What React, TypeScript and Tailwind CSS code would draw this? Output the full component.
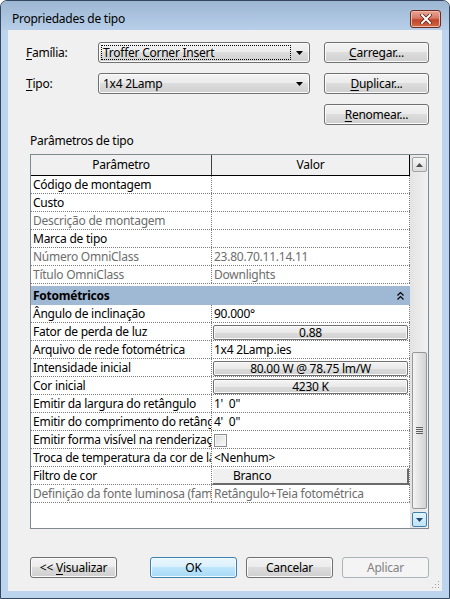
import React from "react";

type Row = {
  p: string;
  v?: string;
  gray?: boolean;
  btn?: string;
  check?: boolean;
  flat?: string;
};

const rowsA: Row[] = [
  { p: "Código de montagem", v: "" },
  { p: "Custo", v: "" },
  { p: "Descrição de montagem", v: "", gray: true },
  { p: "Marca de tipo", v: "" },
  { p: "Número OmniClass", v: "23.80.70.11.14.11", gray: true },
  { p: "Título OmniClass", v: "Downlights", gray: true },
];

const rowsB: Row[] = [
  { p: "Ângulo de inclinação", v: "90.000°" },
  { p: "Fator de perda de luz", btn: "0.88" },
  { p: "Arquivo de rede fotométrica", v: "1x4 2Lamp.ies" },
  { p: "Intensidade inicial", btn: "80.00 W @ 78.75 lm/W" },
  { p: "Cor inicial", btn: "4230 K" },
  { p: "Emitir da largura do retângulo", v: "1'  0\"" },
  { p: "Emitir do comprimento do retângulo", v: "4'  0\"" },
  { p: "Emitir forma visível na renderização", check: true },
  { p: "Troca de temperatura da cor de lâmpada", v: "<Nenhum>" },
  { p: "Filtro de cor", flat: "Branco" },
  { p: "Definição da fonte luminosa (família)", v: "Retângulo+Teia fotométrica", gray: true },
];

function WinButton({
  children,
  className = "",
  kind = "normal",
}: {
  children: React.ReactNode;
  className?: string;
  kind?: "normal" | "default" | "disabled";
}) {
  const styles = {
    normal:
      "border-[#707070] bg-[linear-gradient(to_bottom,#f3f3f3_0%,#ebebeb_50%,#dddddd_50%,#cfcfcf_100%)] text-black shadow-[inset_0_0_0_1px_#fbfbfb]",
    default:
      "border-[#3c7fb1] bg-[linear-gradient(to_bottom,#eaf6fd_0%,#d9f0fc_50%,#bee6fd_50%,#a7d9f5_100%)] text-black shadow-[inset_0_0_0_1px_#f4fbff]",
    disabled: "border-[#adb2b5] bg-[#f4f4f4] text-[#838383]",
  };
  return (
    <div
      className={`flex h-[21px] items-center justify-center rounded-[3px] border text-[12px] leading-none ${styles[kind]} ${className}`}
    >
      {children}
    </div>
  );
}

function Dropdown({ text, focused }: { text: string; focused?: boolean }) {
  return (
    <div className="flex h-[21px] w-[212px] items-stretch rounded-[3px] border border-[#707070] bg-[linear-gradient(to_bottom,#f3f3f3_0%,#ebebeb_50%,#dddddd_50%,#cfcfcf_100%)] p-[2px] shadow-[inset_0_0_0_1px_#fbfbfb]">
      <div
        className={`flex w-[190px] items-center whitespace-nowrap pl-[1px] text-[12px] leading-none text-black ${
          focused ? "border border-dotted border-black" : "border border-transparent"
        }`}
      >
        {text}
      </div>
      <div className="flex flex-1 items-center justify-center">
        <svg width="7" height="4" viewBox="0 0 7 4">
          <polygon points="0,0 7,0 3.5,4" fill="#000" />
        </svg>
      </div>
    </div>
  );
}

function CellValue({ r }: { r: Row }) {
  if (r.btn) {
    return (
      <div className="ml-[1px] mr-[1px] mt-[2px] flex h-[15px] items-center justify-center rounded-[2px] border border-[#707070] bg-[linear-gradient(to_bottom,#f4f4f4_0%,#e9e9e9_50%,#dadada_55%,#d2d2d2_100%)] text-[12px] leading-none text-black shadow-[inset_0_0_0_1px_#fafafa]">
        {r.btn}
      </div>
    );
  }
  if (r.check) {
    return (
      <div className="ml-[2px] mt-[3px] h-[13px] w-[13px] border border-[#8e8f8f] bg-[linear-gradient(to_bottom_right,#dcdcdc,#fbfbfb)] shadow-[inset_0_0_0_1px_#f4f4f4]" />
    );
  }
  if (r.flat) {
    return (
      <div className="mt-[1px] flex h-[17px] items-center border-b-2 border-l border-r-2 border-t border-b-[#6a6a6a] border-l-white border-r-[#6a6a6a] border-t-white bg-[#f0f0f0] pl-[20px] text-[12px] leading-none text-black">
        {r.flat}
      </div>
    );
  }
  return (
    <div
      className={`overflow-hidden whitespace-pre pl-[2px] text-[12px] leading-[17px] ${
        r.gray ? "text-[#6d6d6d]" : "text-black"
      }`}
    >
      {r.v}
    </div>
  );
}

function TableRow({ r }: { r: Row }) {
  return (
    <div className="flex h-[18px] shrink-0 border-b border-dotted border-[#7a7a7a]">
      <div
        className={`w-[181px] shrink-0 overflow-hidden whitespace-nowrap border-r border-dotted border-[#7a7a7a] pl-[2px] text-[12px] leading-[17px] ${
          r.gray ? "text-[#6d6d6d]" : "text-black"
        }`}
      >
        {r.p}
      </div>
      <div className="min-w-0 flex-1 border-r border-dotted border-[#7a7a7a]">
        <CellValue r={r} />
      </div>
    </div>
  );
}

export default function App() {
  return (
    <div className="flex h-[599px] w-[450px] flex-col overflow-hidden rounded-t-[7px] border border-[#34475e] bg-[#bcd4ed] font-['Noto_Sans',sans-serif] text-[12px] tracking-[-0.25px] text-black">
      {/* Title bar */}
      <div className="flex h-[29px] shrink-0 items-center justify-between bg-[linear-gradient(to_bottom,#9db6d2,#b7cfe9)] pl-[11px] pr-[8px] pt-[6px]">
        <div className="text-[12px] leading-none text-black">Propriedades de tipo</div>
        <div className="flex h-[18px] w-[31px] items-center justify-center rounded-[3px] border border-[#6b2b22] bg-[linear-gradient(to_bottom,#e8a493_0%,#d77a66_45%,#c0442b_55%,#d06a45_100%)] shadow-[inset_0_0_0_1px_#f1b9a8]">
          <svg width="12" height="10" viewBox="0 0 12 10">
            <path d="M2 1 L10 9 M10 1 L2 9" stroke="#5a2318" strokeWidth="3.6" strokeLinecap="square" />
            <path d="M2 1 L10 9 M10 1 L2 9" stroke="#ffffff" strokeWidth="2" strokeLinecap="square" />
          </svg>
        </div>
      </div>

      {/* Client area */}
      <div className="relative mx-[7px] mb-[7px] flex flex-1 flex-col bg-[#f0f0f0]">
        {/* Row Família */}
        <div className="mt-[12px] flex h-[21px] items-center">
          <div className="ml-[18px] w-[72px] leading-none">
            <span className="underline underline-offset-2">F</span>amília:
          </div>
          <Dropdown text="Troffer Corner Insert" focused />
          <div className="w-[14px]" />
          <WinButton className="w-[105px]">
            <span className="underline underline-offset-2">C</span>arregar...
          </WinButton>
        </div>
        {/* Row Tipo */}
        <div className="mt-[10px] flex h-[21px] items-center">
          <div className="ml-[18px] w-[72px] leading-none">
            <span className="underline underline-offset-2">T</span>ipo:
          </div>
          <Dropdown text="1x4 2Lamp" />
          <div className="w-[14px]" />
          <WinButton className="w-[105px]">
            <span className="underline underline-offset-2">D</span>uplicar...
          </WinButton>
        </div>
        {/* Row Renomear */}
        <div className="mt-[10px] flex h-[21px] items-center">
          <WinButton className="ml-[316px] w-[105px]">
            <span className="underline underline-offset-2">R</span>enomear...
          </WinButton>
        </div>

        <div className="ml-[22px] mt-[8px] h-[16px] leading-[16px]">Parâmetros de tipo</div>

        {/* Table */}
        <div className="ml-[22px] mt-[5px] flex h-[375px] w-[399px] border border-[#828790] bg-white">
          <div className="flex w-[379px] flex-col">
            <div className="flex h-[21px] shrink-0 border-b border-black bg-[#f0f0f0]">
              <div className="flex w-[181px] items-center justify-center border-r border-[#404040] leading-none">
                Parâmetro
              </div>
              <div className="flex flex-1 items-center justify-center border-r border-black leading-none">Valor</div>
            </div>
            {rowsA.map((r) => (
              <TableRow key={r.p} r={r} />
            ))}
            <div className="h-[2px] shrink-0 bg-white" />
            <div className="flex h-[19px] shrink-0 items-center justify-between bg-[#9fb8d3] pl-[2px] pr-[6px]">
              <span className="text-[12px] font-bold leading-none text-black">Fotométricos</span>
              <svg width="7" height="8" viewBox="0 0 7 8">
                <path d="M0.5 3.5 L3.5 0.5 L6.5 3.5 M0.5 7.5 L3.5 4.5 L6.5 7.5" fill="none" stroke="#000" strokeWidth="1.2" />
              </svg>
            </div>
            {rowsB.map((r) => (
              <TableRow key={r.p} r={r} />
            ))}
            <div className="flex-1 bg-white" />
          </div>

          {/* Scrollbar */}
          <div className="flex flex-1 flex-col bg-[linear-gradient(to_right,#e3e3e3,#f1f1f1)] pl-[2px] pr-[1px]">
            <div className="mt-[2px] flex h-[15px] w-[15px] items-center justify-center rounded-[2px] border border-[#a3a3a3] bg-[linear-gradient(to_bottom,#f6f6f6,#dcdcdc)]">
              <svg width="7" height="4" viewBox="0 0 7 4">
                <polygon points="0,4 7,4 3.5,0" fill="#4d4d4d" />
              </svg>
            </div>
            <div className="h-[180px]" />
            <div className="flex h-[157px] w-[15px] items-center justify-center rounded-[2px] border border-[#979797] bg-[linear-gradient(to_right,#f4f4f4,#e0e0e0_60%,#d4d4d4)]">
              <div className="flex flex-col gap-[1px]">
                <div className="h-[1px] w-[7px] bg-[#5f5f5f]" />
                <div className="h-[1px] w-[7px] bg-[#5f5f5f]" />
                <div className="h-[1px] w-[7px] bg-[#5f5f5f]" />
                <div className="h-[1px] w-[7px] bg-[#5f5f5f]" />
              </div>
            </div>
            <div className="h-[3px]" />
            <div className="flex h-[15px] w-[15px] items-center justify-center rounded-[2px] border border-[#3c7fb1] bg-[linear-gradient(to_bottom,#e3f4fc,#bfe2f6)]">
              <svg width="7" height="4" viewBox="0 0 7 4">
                <polygon points="0,0 7,0 3.5,4" fill="#1c4a74" />
              </svg>
            </div>
          </div>
        </div>

        {/* Bottom buttons */}
        <div className="mt-[28px] flex items-center">
          <WinButton className="ml-[22px] w-[87px]">
            &lt;&lt; <span className="ml-[3px] underline underline-offset-2">V</span>isualizar
          </WinButton>
          <WinButton kind="default" className="ml-[33px] w-[87px]">
            OK
          </WinButton>
          <WinButton className="ml-[9px] w-[87px]">Cancelar</WinButton>
          <WinButton kind="disabled" className="ml-[9px] w-[87px]">
            Aplicar
          </WinButton>
        </div>

        {/* Size grip */}
        <svg className="absolute bottom-[2px] right-[2px]" width="8" height="8" viewBox="0 0 8 8">
          <rect x="6" y="0" width="1" height="1" fill="#a0a0a0" />
          <rect x="3" y="3" width="1" height="1" fill="#a0a0a0" />
          <rect x="6" y="3" width="1" height="1" fill="#a0a0a0" />
          <rect x="0" y="6" width="1" height="1" fill="#a0a0a0" />
          <rect x="3" y="6" width="1" height="1" fill="#a0a0a0" />
          <rect x="6" y="6" width="1" height="1" fill="#a0a0a0" />
        </svg>
      </div>
    </div>
  );
}
